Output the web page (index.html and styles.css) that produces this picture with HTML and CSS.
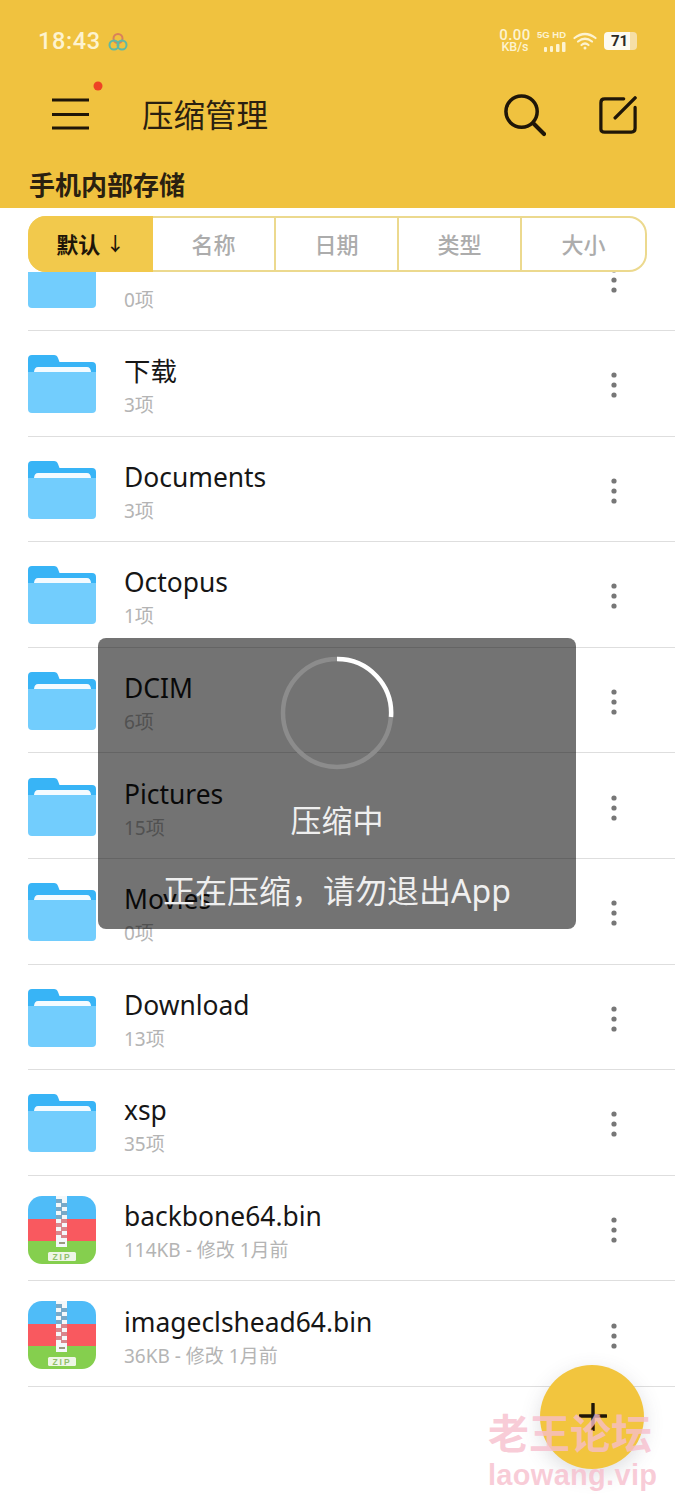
FILE: index.html
```html
<!DOCTYPE html>
<html lang="zh">
<head>
<meta charset="utf-8">
<title>压缩管理</title>
<link rel="stylesheet" href="styles.css">
</head>
<body>
<svg class="defs" width="0" height="0" aria-hidden="true">
  <symbol id="folder" viewBox="0 0 68 58">
    <path d="M4 0H26Q29 0 30 3L31.500 7H64Q68 7 68 11V30H0V4Q0 0 4 0Z" fill="#38b4f6"/>
    <path d="M10 12H59Q62.500 12 63 17H6Q6.500 12 10 12Z" fill="#f4fbff"/>
    <path d="M0 17H68V54Q68 58 64 58H4Q0 58 0 54Z" fill="#72cdfd"/>
  </symbol>
  <symbol id="zip" viewBox="0 0 68 68">
    <clipPath id="zipclip"><rect width="68" height="68" rx="14"/></clipPath>
    <g clip-path="url(#zipclip)">
      <rect width="68" height="23" fill="#4fbcf8"/>
      <rect y="23" width="68" height="22" fill="#f9595f"/>
      <rect y="45" width="68" height="23" fill="#85cf4e"/>
      <rect x="28" width="11" height="51" fill="#f4f8fa"/>
      <path d="M28 3h6v4h-6zM33 7h6v4h-6zM28 11h6v4h-6zM33 15h6v4h-6zM28 19h6v4h-6z" fill="#78a9c8"/>
      <path d="M33 23h6v4h-6zM28 27h6v4h-6zM33 31h6v4h-6zM28 35h6v4h-6zM33 39h6v3h-6z" fill="#d9868c"/>
      <rect x="31" y="46" width="6" height="2" fill="#9a9a80"/>
      <rect x="20" y="56" width="28" height="9" rx="1.500" fill="#eef6e6"/>
      <text x="34" y="64" class="zip-label" text-anchor="middle">ZIP</text>
    </g>
  </symbol>
  <symbol id="dots" viewBox="0 0 6 26">
    <circle cx="3" cy="3" r="2.600"/><circle cx="3" cy="13" r="2.600"/><circle cx="3" cy="23" r="2.600"/>
  </symbol>
</svg>

<header class="appbar">
  <div class="status">
    <div class="status-left">
      <span class="time">18:43</span>
      <svg class="clover" viewBox="0 0 20 20" width="20" height="20">
        <circle cx="10" cy="6.500" r="4.500" fill="none" stroke="#d9805a" stroke-width="2"/>
        <circle cx="6" cy="13" r="4.500" fill="none" stroke="#5fb9a5" stroke-width="2"/>
        <circle cx="14" cy="13" r="4.500" fill="none" stroke="#5fb9a5" stroke-width="2"/>
      </svg>
    </div>
    <div class="status-right">
      <div class="speed"><span class="speed-num">0.00</span><span class="speed-unit">KB/s</span></div>
      <div class="net">
        <span class="net-label">5G HD</span>
        <svg viewBox="0 0 22 10" width="22" height="10" class="bars">
          <rect x="0" y="5" width="3" height="5" rx="1"/><rect x="6" y="4" width="3" height="6" rx="1"/><rect x="12" y="2" width="3.500" height="8" rx="1"/><rect x="18" y="0" width="3.500" height="10" rx="1"/>
        </svg>
      </div>
      <svg class="wifi" viewBox="0 0 24 18" width="24" height="18" fill="none" stroke="#fdf3d0" stroke-linecap="round">
        <path d="M1.500 6Q12 -2 22.500 6" stroke-width="2.200"/>
        <path d="M5 9.500Q12 4 19 9.500" stroke-width="2.200"/>
        <path d="M8.500 13Q12 10 15.500 13" stroke-width="2.200"/>
        <circle cx="12" cy="16" r="1.500" fill="#fdf3d0" stroke="none"/>
      </svg>
      <div class="battery">71</div>
    </div>
  </div>

  <div class="toolbar">
    <div class="menu">
      <svg viewBox="0 0 50 40" width="50" height="40" fill="none" stroke="#1f1608" stroke-width="3.200">
        <path d="M0 14H37M0 28.500H37M0 42H37"/>
        <circle cx="46" cy="0" r="4.500" fill="#ee4324" stroke="none"/>
      </svg>
    </div>
    <h1 class="title">压缩管理</h1>
    <div class="actions">
      <svg class="search-icon" viewBox="0 0 44 44" fill="none" stroke="#1f1608" stroke-width="3.600" stroke-linecap="round">
        <circle cx="19" cy="18" r="16"/>
        <path d="M31 30L42 41" stroke-width="4.200"/>
      </svg>
      <svg class="edit-icon" viewBox="0 0 40 40" fill="none" stroke="#1f1608" stroke-width="3.400" stroke-linecap="round" stroke-linejoin="round">
        <path d="M26 3H6Q2 3 2 7V35Q2 38 6 38H34Q38 38 38 34V12"/>
        <path d="M38 2L17 23" stroke-width="3.600"/>
      </svg>
    </div>
  </div>

  <div class="storage">手机内部存储</div>
</header>

<nav class="tabs">
  <div class="tab tab-active">默认 <span class="arrow">↓</span></div>
  <div class="tab">名称</div>
  <div class="tab">日期</div>
  <div class="tab">类型</div>
  <div class="tab tab-last">大小</div>
</nav>

<main class="list">
  <div class="clip">
    <div class="row">
      <svg class="icon folder"><use href="#folder"/></svg>
      <div class="info"><div class="name">&nbsp;</div><div class="meta">0项</div></div>
      <svg class="more"><use href="#dots"/></svg>
    </div>
  </div>
  <div class="row">
    <svg class="icon folder"><use href="#folder"/></svg>
    <div class="info"><div class="name">下载</div><div class="meta">3项</div></div>
    <svg class="more"><use href="#dots"/></svg>
  </div>
  <div class="row">
    <svg class="icon folder"><use href="#folder"/></svg>
    <div class="info"><div class="name">Documents</div><div class="meta">3项</div></div>
    <svg class="more"><use href="#dots"/></svg>
  </div>
  <div class="row">
    <svg class="icon folder"><use href="#folder"/></svg>
    <div class="info"><div class="name">Octopus</div><div class="meta">1项</div></div>
    <svg class="more"><use href="#dots"/></svg>
  </div>
  <div class="row">
    <svg class="icon folder"><use href="#folder"/></svg>
    <div class="info"><div class="name">DCIM</div><div class="meta">6项</div></div>
    <svg class="more"><use href="#dots"/></svg>
  </div>
  <div class="row">
    <svg class="icon folder"><use href="#folder"/></svg>
    <div class="info"><div class="name">Pictures</div><div class="meta">15项</div></div>
    <svg class="more"><use href="#dots"/></svg>
  </div>
  <div class="row">
    <svg class="icon folder"><use href="#folder"/></svg>
    <div class="info"><div class="name">Movies</div><div class="meta">0项</div></div>
    <svg class="more"><use href="#dots"/></svg>
  </div>
  <div class="row">
    <svg class="icon folder"><use href="#folder"/></svg>
    <div class="info"><div class="name">Download</div><div class="meta">13项</div></div>
    <svg class="more"><use href="#dots"/></svg>
  </div>
  <div class="row">
    <svg class="icon folder"><use href="#folder"/></svg>
    <div class="info"><div class="name">xsp</div><div class="meta">35项</div></div>
    <svg class="more"><use href="#dots"/></svg>
  </div>
  <div class="row">
    <svg class="icon zip"><use href="#zip"/></svg>
    <div class="info"><div class="name">backbone64.bin</div><div class="meta">114KB - 修改 1月前</div></div>
    <svg class="more"><use href="#dots"/></svg>
  </div>
  <div class="row">
    <svg class="icon zip"><use href="#zip"/></svg>
    <div class="info"><div class="name">imageclshead64.bin</div><div class="meta">36KB - 修改 1月前</div></div>
    <svg class="more"><use href="#dots"/></svg>
  </div>
</main>

<div class="dialog">
  <svg class="spinner" viewBox="0 0 114 114" width="114" height="114" fill="none" stroke-width="4.500">
    <circle cx="57" cy="57" r="54" stroke="#8c8c8c"/>
    <path d="M57 3A54 54 0 0 1 111 61" stroke="#ffffff"/>
  </svg>
  <div class="dialog-title">压缩中</div>
  <div class="dialog-text">正在压缩，请勿退出App</div>
</div>

<div class="fab">
  <svg viewBox="0 0 28 28" width="28" height="28" fill="none" stroke="#1f1608" stroke-width="3.400" stroke-linecap="round">
    <path d="M1 13H27M14 1V27"/>
  </svg>
</div>

<div class="watermark">
  <div class="wm-cn">老王论坛</div>
  <div class="wm-en">laowang.vip</div>
</div>
</body>
</html>
```
FILE: styles.css
```css
* {
  box-sizing: border-box;
}

html,
body {
  margin: 0;
  height: 1500px;
  overflow: hidden;
  background: #ffffff;
}

body {
  position: relative;
  font-family: "Noto Sans", "Noto Sans CJK SC", sans-serif;
  color: #161616;
}

.defs {
  position: absolute;
}

.zip-label {
  font: 700 8.500px "Liberation Sans", sans-serif;
  letter-spacing: 2px;
  fill: #8fbf6a;
}

/* App bar */
.appbar {
  height: 208px;
  background: #f0c23f;
  display: flex;
  flex-direction: column;
}

.status {
  flex: none;
  height: 72px;
  padding: 23px 38px 0;
  display: flex;
  justify-content: space-between;
  align-items: flex-start;
  color: #fdf3d0;
}

.status-left {
  display: flex;
  align-items: center;
  gap: 7px;
  height: 36px;
}

.time {
  font: 500 23.500px/36px Roboto, sans-serif;
  letter-spacing: 0.600px;
}

.clover {
  margin-top: 2px;
}

.status-right {
  display: flex;
  align-items: center;
  height: 36px;
}

.speed {
  width: 36px;
  margin-right: 3px;
  display: flex;
  flex-direction: column;
  align-items: center;
  font-family: Roboto, sans-serif;
  font-weight: 500;
}

.speed-num {
  font-size: 15px;
  line-height: 12px;
  letter-spacing: 0.400px;
}

.speed-unit {
  font-size: 12.500px;
  line-height: 12px;
}

.net {
  width: 30px;
  margin-right: 7px;
  display: flex;
  flex-direction: column;
  align-items: flex-end;
  gap: 2px;
}

.net-label {
  font: 700 9.500px/10px "Liberation Sans", sans-serif;
  white-space: nowrap;
}

.bars {
  fill: #fdf3d0;
}

.wifi {
  margin-right: 7px;
}

.battery {
  width: 33px;
  height: 18px;
  border-radius: 4px;
  background: linear-gradient(90deg, #fdfaf0 78%, #f6dfa6 78%);
  color: #2c2a24;
  font: 700 15px/18px Roboto, sans-serif;
  padding-right: 2px;
  text-align: center;
}

.toolbar {
  flex: none;
  height: 86px;
  padding: 0 38px 0 52px;
  display: flex;
  align-items: center;
}

.menu {
  width: 90px;
  height: 40px;
  margin-top: -18px;
}

.menu svg {
  overflow: visible;
}

.title {
  margin: 0;
  flex: 1;
  font-size: 31.500px;
  font-weight: 400;
  color: #2a2010;
  line-height: 44px;
}

.actions {
  display: flex;
  align-items: center;
  gap: 53px;
}

.search-icon {
  width: 43px;
  height: 43px;
}

.edit-icon {
  width: 38px;
  height: 38px;
}

.storage {
  padding-left: 29px;
  font-size: 26px;
  font-weight: 700;
  line-height: 36px;
  color: #2a2010;
  margin-top: 9px;
}

/* Sort tabs */
.tabs {
  height: 56px;
  margin: 8px 28px 0;
  border: 2px solid #ecd98e;
  border-radius: 18px;
  display: grid;
  grid-template-columns: repeat(5, 1fr);
  position: relative;
  z-index: 1;
  background: #ffffff;
}

.tab {
  display: flex;
  align-items: center;
  justify-content: center;
  padding-bottom: 3px;
  font-size: 22px;
  font-weight: 500;
  color: #acacac;
  border-right: 2px solid #ecd98e;
}

.tab-last {
  border-right: 0;
}

.tab-active {
  margin: -2px 0 -2px -2px;
  border-right: 0;
  border-radius: 18px 0 0 18px;
  background: #f2c94c;
  color: #1f1608;
  font-weight: 700;
  white-space: pre;
}

.arrow {
  font-size: 19px;
  font-weight: 500;
}

/* List */
.clip {
  height: 59px;
  overflow: hidden;
  display: flex;
  flex-direction: column;
  justify-content: flex-end;
}

.row {
  flex: none;
  height: 105.600px;
  margin: 0;
  padding: 0 58px 0 28px;
  display: flex;
  align-items: center;
  position: relative;
}

.row::after {
  content: "";
  position: absolute;
  left: 28px;
  right: 0;
  bottom: 0;
  height: 1px;
  background: #dedede;
}

.icon {
  flex: none;
  width: 68px;
}

.folder {
  height: 58px;
  margin-top: 1px;
}

.zip {
  height: 68px;
  margin-top: 2px;
}

.info {
  flex: 1;
  margin-left: 28px;
  margin-top: 4px;
}

.name {
  font-size: 26.400px;
  line-height: 36px;
  color: #161616;
}

.meta {
  font-size: 19px;
  line-height: 26px;
  margin-top: 3px;
  color: #b4b4b4;
}

.more {
  flex: none;
  width: 6px;
  height: 26px;
  fill: #777777;
  margin-top: 3px;
}

/* Progress dialog */
.dialog {
  position: absolute;
  left: 98px;
  top: 638px;
  width: 478px;
  height: 291px;
  border-radius: 8px;
  background: rgba(0, 0, 0, 0.55);
  display: flex;
  flex-direction: column;
  align-items: center;
  padding-top: 18px;
  z-index: 2;
}

.dialog-title {
  margin-top: 28px;
  font-size: 31px;
  line-height: 44px;
  color: #efefef;
}

.dialog-text {
  margin-top: 27px;
  font-size: 32px;
  line-height: 44px;
  color: #efefef;
  white-space: nowrap;
}

/* Floating button and watermark */
.fab {
  position: absolute;
  left: 540px;
  top: 1365px;
  width: 104px;
  height: 104px;
  border-radius: 50%;
  background: #f2c53e;
  box-shadow: 0 6px 20px rgba(70, 70, 90, 0.18);
  display: flex;
  align-items: center;
  justify-content: center;
  padding-left: 2px;
  z-index: 3;
}

.watermark {
  position: absolute;
  left: 488px;
  top: 1408px;
  width: 170px;
  color: rgba(247, 190, 205, 0.78);
  z-index: 4;
}

.wm-cn {
  font-size: 41px;
  font-weight: 700;
  line-height: 50px;
  white-space: nowrap;
}

.wm-en {
  font: 700 29px/34px "Liberation Sans", sans-serif;
  letter-spacing: 0.300px;
  white-space: nowrap;
}
```
